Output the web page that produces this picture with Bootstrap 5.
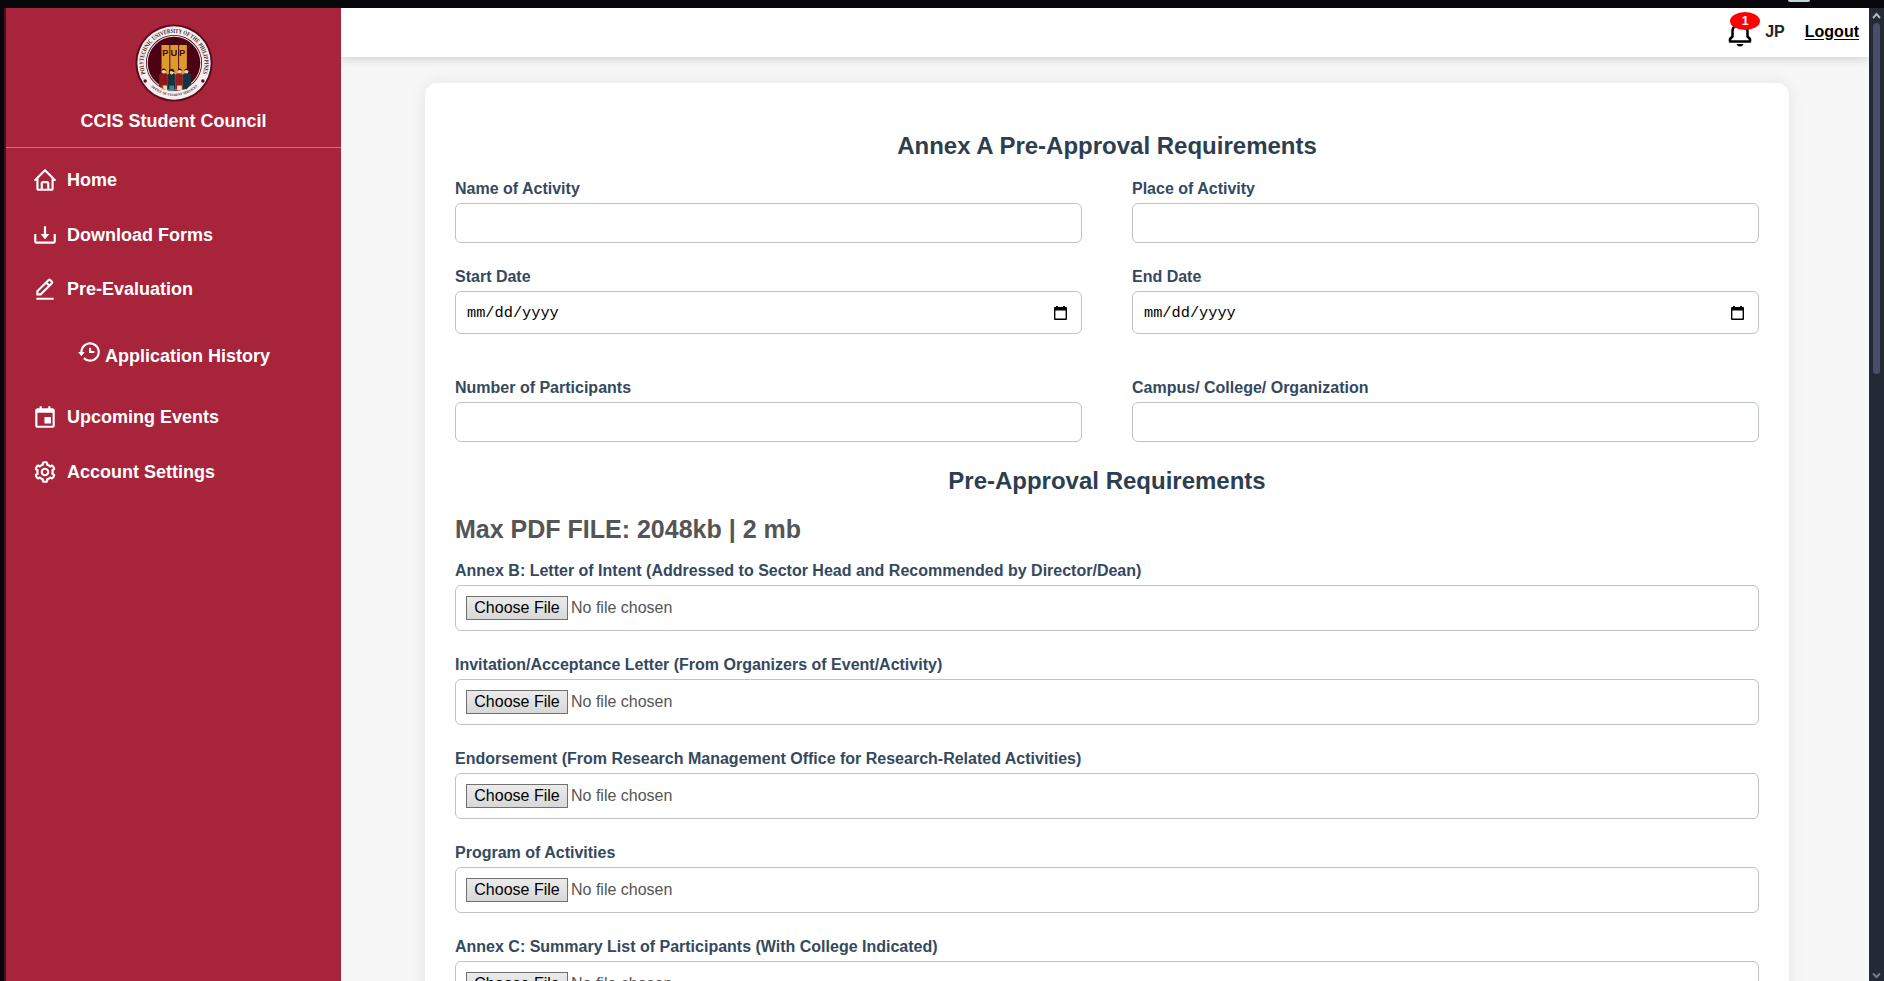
<!DOCTYPE html>
<html lang="en">
<head>
<meta charset="utf-8">
<title>CCIS Student Council</title>
<link href="https://cdn.jsdelivr.net/npm/bootstrap@5.3.0/dist/css/bootstrap.min.css" rel="stylesheet">
<style>
html, body { height: 100%; }
body { font-family: "Liberation Sans", Arial, sans-serif; font-size: 16px; background: #08080c; }
.screen { height: 981px; padding: 8px 0 0 4px; }
.tab-mark { left: 1788px; top: 0; width: 22px; height: 2px; background: #bcd6d0; border-radius: 0 0 8px 8px; }
.sidebar { width: 337px; background: #a7243b; border-left: 2px solid #4a0f22; color: #fff; font-size: 18px; font-weight: 700; line-height: 24px; }
.brand { height: 140px; border-bottom: 1px solid #cb7484; padding-top: 16px; }
.brand svg { width: 78px; height: 78px; }
.brand-name { margin-top: 7px; }
.side-menu a { color: #fff; height: 55px; padding: 1px 0 0 26px; gap: 9px; }
.side-menu svg { width: 26px; height: 26px; fill: #fff; }
.side-menu { padding-top: 4px; }
.side-menu a.tight { height: 54px; padding-top: 0; }
.side-menu a.sub { height: 73px; padding: 7px 0 0 70px; gap: 3px; }
.side-menu a.sub svg { margin-top: -9px; }
.page { background: #f7f7f7; }
.topbar { height: 49px; background: #fff; box-shadow: 0 2px 10px rgba(0,0,0,.16); padding: 0 10px 2px 0; font-weight: 700; z-index: 2; }
.topbar a { color: #000; margin-left: 20px; text-underline-offset: 2px; }
.bell { width: 30px; height: 30px; margin-right: 10px; }
.bell svg { width: 30px; height: 30px; display: block; margin-top: 2px; }
.count { left: 5px; top: -5px; width: 30px; height: 18px; border-radius: 50%; background: #f00; color: #fff; font-size: 12.5px; line-height: 18px; text-align: center; }
.form-card { margin: 26px 80px 0 84px; height: 1000px; padding: 49px 30px 0; background: #fff; border-radius: 12px; box-shadow: 0 0 16px rgba(0,0,0,.09); }
h2 { font-size: 24px; line-height: 28px; font-weight: 700; color: #2c3e50; text-align: center; margin: 0; }
.limit { font-size: 25px; line-height: 28px; font-weight: 700; color: #555; margin: 20px 0 15px; }
.cols { display: grid; grid-template-columns: 1fr 1fr; column-gap: 50px; }
.lbl { font-weight: 700; color: #34495e; line-height: 24px; padding-top: 1px; margin-bottom: 2px; }
.field { border: 1px solid #bdc3c7; border-radius: 6px; height: 40px; background: #fff; }
.field.date { height: 43px; padding: 2px 14px 0 11px; font-family: "Liberation Mono", monospace; font-size: 15.3px; color: #000; }
.field.date svg { width: 13px; height: 15px; }
.field.file { height: 46px; padding: 0 10px; color: #555; }
.pick { width: 102px; height: 24px; border: 1px solid #707070; background: linear-gradient(#ebebeb, #d8d8d8); color: #000; line-height: 22px; text-align: center; margin-right: 3px; }
.scroller { width: 15px; background: #242936; padding: 4px 0 2px; }
.thumb { width: 7px; height: 351px; border-radius: 4px; background: #4b4e67; margin-top: 4px; }
</style>
</head>
<body class="overflow-hidden">
<div class="screen d-flex position-relative overflow-hidden">
  <span class="tab-mark position-absolute"></span>
  <aside class="sidebar flex-shrink-0">
    <div class="brand text-center">
      <svg class="d-block mx-auto" viewBox="0 0 100 100">
        <circle cx="50" cy="50" r="49.5" fill="#5a0a1c"/>
        <circle cx="50" cy="50" r="47" fill="#f6efee"/>
        <circle cx="50" cy="50" r="36" fill="#4b0212"/>
        <circle cx="50" cy="50" r="34.3" fill="none" stroke="#f0dede" stroke-width="1.3"/>
        <defs>
          <path id="arcTop" d="M13.700 64.700A39 39 0 1 1 86.300 64.700"/>
          <path id="arcBottom" d="M12.600 70A42.500 42.500 0 0 0 87.400 70"/>
        </defs>
        <text font-family="Liberation Serif" font-weight="700" font-size="8" fill="#4b1520"><textPath href="#arcTop" startOffset="1" textLength="149" lengthAdjust="spacingAndGlyphs">POLYTECHNIC UNIVERSITY OF THE PHILIPPINES</textPath></text>
        <text font-family="Liberation Serif" font-weight="700" font-size="4.6" fill="#4b1520"><textPath href="#arcBottom" startOffset="13" textLength="66" lengthAdjust="spacingAndGlyphs">OFFICE OF STUDENT SERVICES</textPath></text>
        <circle cx="13" cy="73" r="2.2" fill="#5a0a1c"/><circle cx="87" cy="73" r="2.2" fill="#5a0a1c"/>
        <path d="M34 27h10v57H34zM45.300 27h10v57h-10zM56.500 27h10v57h-10z" fill="#df9a2e"/>
        <text x="35" y="41" font-size="12" font-weight="700" font-family="Liberation Sans" fill="#4b0212" letter-spacing="2.4">PUP</text>
        <path d="M31 80v-15q5-6 11 0v19z" fill="#8e1717"/><path d="M42 84V65q5-5 10 0v19z" fill="#173238"/><path d="M52 84V65q5-5 9 0v19z" fill="#9a1b1d"/><path d="M61 84V65q6-5 11 0v12l-5 6z" fill="#1b3244"/>
        <path d="M35 79h6v6l-4-2zM54 79h6v6h-6z" fill="#efdcc3"/><path d="M44 79h6v7h-6z" fill="#3d8590"/>
        <g fill="#f3cdb5"><circle cx="37" cy="61" r="2.600"/><circle cx="47" cy="62" r="2.600"/><circle cx="57" cy="61" r="2.600"/><circle cx="66" cy="61" r="2.600"/></g>
        <g fill="#20121a"><path d="M33.500 60q3-6 7 0l-4-1zM43.500 65v-5q4-5 7 0v2l-5-2zM54 60q3-6 7 0l-4-1zM62.500 60q4-6 7 0l-4-1z"/></g>
      </svg>
      <div class="brand-name">CCIS Student Council</div>
    </div>
    <nav class="side-menu">
      <a class="d-flex align-items-center text-decoration-none" href="#"><svg viewBox="0 0 24 24"><path d="M3 13h1v7c0 1.103.897 2 2 2h12c1.103 0 2-.897 2-2v-7h1a1 1 0 0 0 .707-1.707l-9-9a.999.999 0 0 0-1.414 0l-9 9A1 1 0 0 0 3 13zm7 7v-5h4v5h-4zm2-15.586 6 6V15l.001 5H16v-5c0-1.103-.897-2-2-2h-4c-1.103 0-2 .897-2 2v5H6v-9.586l6-6z"/></svg><span>Home</span></a>
      <a class="d-flex align-items-center text-decoration-none" href="#"><svg viewBox="0 0 24 24"><path d="m12 16 4-5h-3V4h-2v7H8z"/><path d="M20 18H4v-7H2v7c0 1.103.897 2 2 2h16c1.103 0 2-.897 2-2v-7h-2v7z"/></svg><span>Download Forms</span></a>
      <a class="tight d-flex align-items-center text-decoration-none" href="#"><svg viewBox="0 0 24 24"><path d="M19.045 7.401c.378-.378.586-.88.586-1.414s-.208-1.036-.586-1.414l-1.586-1.586c-.378-.378-.88-.586-1.414-.586s-1.036.208-1.413.585L4 13.585V18h4.413L19.045 7.401zm-3-3 1.587 1.585-1.590 1.584-1.586-1.585 1.589-1.584zM6 16v-1.585l7.040-7.018 1.586 1.586L7.587 16H6zm-2 4h16v2H4z"/></svg><span>Pre-Evaluation</span></a>
      <a class="sub d-flex align-items-center text-decoration-none" href="#"><svg viewBox="0 0 24 24"><path d="M12 8v5h5v-2h-3V8z"/><path d="M21.292 8.497a8.957 8.957 0 0 0-1.928-2.862 9.004 9.004 0 0 0-4.550-2.452 9.090 9.090 0 0 0-3.626 0 8.965 8.965 0 0 0-4.552 2.453 9.048 9.048 0 0 0-1.928 2.860A8.963 8.963 0 0 0 4 12l.001.025H2L5 16l3-3.975H6.001L6 12a6.957 6.957 0 0 1 1.195-3.913 7.066 7.066 0 0 1 1.891-1.892 7.034 7.034 0 0 1 2.503-1.054 7.003 7.003 0 0 1 8.269 5.445 7.117 7.117 0 0 1 0 2.824 6.936 6.936 0 0 1-1.054 2.503c-.25.371-.537.72-.854 1.036a7.058 7.058 0 0 1-2.225 1.501 6.980 6.980 0 0 1-1.313.408 7.117 7.117 0 0 1-2.823 0 6.957 6.957 0 0 1-2.501-1.053 7.066 7.066 0 0 1-1.037-.855l-1.414 1.414A8.985 8.985 0 0 0 13 21a9.050 9.050 0 0 0 3.503-.707 9.009 9.009 0 0 0 3.959-3.260A8.968 8.968 0 0 0 22 12a8.928 8.928 0 0 0-.708-3.503z"/></svg><span>Application History</span></a>
      <a class="d-flex align-items-center text-decoration-none" href="#"><svg viewBox="0 0 24 24"><path d="M19 4h-2V2h-2v2H9V2H7v2H5c-1.103 0-2 .897-2 2v14c0 1.103.897 2 2 2h14c1.103 0 2-.897 2-2V6c0-1.103-.897-2-2-2zm0 16H5V8h14z"/><path d="M11.500 12h6v6h-6z"/></svg><span>Upcoming Events</span></a>
      <a class="d-flex align-items-center text-decoration-none" href="#"><svg viewBox="0 0 24 24"><path d="M12 16c2.206 0 4-1.794 4-4s-1.794-4-4-4-4 1.794-4 4 1.794 4 4 4zm0-6c1.084 0 2 .916 2 2s-.916 2-2 2-2-.916-2-2 .916-2 2-2z"/><path d="m2.845 16.136 1 1.730c.531.917 1.809 1.261 2.730.730l.529-.306A8.100 8.100 0 0 0 9 19.402V20c0 1.103.897 2 2 2h2c1.103 0 2-.897 2-2v-.598a8.132 8.132 0 0 0 1.896-1.111l.530.306c.923.530 2.198.188 2.731-.731l.999-1.729a2.001 2.001 0 0 0-.731-2.732l-.505-.292a7.718 7.718 0 0 0 0-2.224l.505-.292a2.002 2.002 0 0 0 .731-2.732l-.999-1.729c-.531-.920-1.808-1.265-2.731-.732l-.530.306A8.100 8.100 0 0 0 15 4.598V4c0-1.103-.897-2-2-2h-2c-1.103 0-2 .897-2 2v.598a8.132 8.132 0 0 0-1.896 1.111l-.530-.306c-.924-.531-2.200-.187-2.731.732l-.999 1.729a2.001 2.001 0 0 0 .731 2.732l.505.292a7.683 7.683 0 0 0 0 2.223l-.505.292a2.003 2.003 0 0 0-.731 2.733zm3.326-2.758A5.703 5.703 0 0 1 6 12c0-.462.058-.926.170-1.378a.999.999 0 0 0-.470-1.108l-1.123-.650.998-1.729 1.145.662a.997.997 0 0 0 1.188-.142 6.071 6.071 0 0 1 2.384-1.399A1 1 0 0 0 11 5.300V4h2v1.300a1 1 0 0 0 .708.956 6.083 6.083 0 0 1 2.384 1.399.999.999 0 0 0 1.188.142l1.144-.661 1 1.729-1.124.649a1 1 0 0 0-.470 1.108c.112.452.170.916.170 1.378 0 .461-.058.925-.171 1.378a1 1 0 0 0 .471 1.108l1.123.649-.998 1.729-1.145-.661a.996.996 0 0 0-1.188.142 6.071 6.071 0 0 1-2.384 1.399A1 1 0 0 0 13 18.700l.002 1.300H11v-1.300a1 1 0 0 0-.708-.956 6.083 6.083 0 0 1-2.384-1.399.992.992 0 0 0-1.188-.141l-1.144.662-1-1.729 1.124-.651a1 1 0 0 0 .471-1.108z"/></svg><span>Account Settings</span></a>
    </nav>
  </aside>
  <main class="page flex-grow-1 overflow-hidden">
    <header class="topbar d-flex justify-content-end align-items-center position-relative">
      <div class="bell position-relative">
        <svg viewBox="0 0 24 24"><path d="M19 13.586V10c0-3.217-2.185-5.927-5.145-6.742C13.562 2.520 12.846 2 12 2s-1.562.520-1.855 1.258C7.185 4.074 5 6.783 5 10v3.586l-1.707 1.707A.996.996 0 0 0 3 16v2a1 1 0 0 0 1 1h16a1 1 0 0 0 1-1v-2a.996.996 0 0 0-.293-.707L19 13.586zM19 17H5v-.586l1.707-1.707A.996.996 0 0 0 7 14v-4c0-2.757 2.243-5 5-5s5 2.243 5 5v4c0 .266.105.520.293.707L19 16.414V17zm-7 5a2.980 2.980 0 0 0 2.818-2H9.182A2.980 2.980 0 0 0 12 22z"/></svg>
        <span class="count position-absolute">1</span>
      </div>
      <span>JP</span>
      <a href="#">Logout</a>
    </header>
    <section class="form-card">
      <h2>Annex A Pre-Approval Requirements</h2>
      <div class="cols mt-3">
        <div><div class="lbl">Name of Activity</div><div class="field"></div></div>
        <div><div class="lbl">Place of Activity</div><div class="field"></div></div>
      </div>
      <div class="cols" style="margin-top:21px">
        <div><div class="lbl">Start Date</div><div class="field date d-flex align-items-center justify-content-between"><span>mm/dd/yyyy</span><svg viewBox="0 0 13 15"><path d="M2 0h2v1h5V0h2v1h1a1 1 0 0 1 1 1v11a1 1 0 0 1-1 1H1a1 1 0 0 1-1-1V2a1 1 0 0 1 1-1h1zM1.400 4.500v8.100h10.200V4.500z"/></svg></div></div>
        <div><div class="lbl">End Date</div><div class="field date d-flex align-items-center justify-content-between"><span>mm/dd/yyyy</span><svg viewBox="0 0 13 15"><path d="M2 0h2v1h5V0h2v1h1a1 1 0 0 1 1 1v11a1 1 0 0 1-1 1H1a1 1 0 0 1-1-1V2a1 1 0 0 1 1-1h1zM1.400 4.500v8.100h10.200V4.500z"/></svg></div></div>
      </div>
      <div class="cols" style="margin-top:41px">
        <div><div class="lbl">Number of Participants</div><div class="field"></div></div>
        <div><div class="lbl">Campus/ College/ Organization</div><div class="field"></div></div>
      </div>
      <h2 style="margin-top:25px">Pre-Approval Requirements</h2>
      <div class="limit">Max PDF FILE: 2048kb | 2 mb</div>
      <div class="d-grid" style="row-gap:21px">
        <div><div class="lbl">Annex B: Letter of Intent (Addressed to Sector Head and Recommended by Director/Dean)</div><div class="field file d-flex align-items-center"><span class="pick">Choose File</span><span>No file chosen</span></div></div>
        <div><div class="lbl">Invitation/Acceptance Letter (From Organizers of Event/Activity)</div><div class="field file d-flex align-items-center"><span class="pick">Choose File</span><span>No file chosen</span></div></div>
        <div><div class="lbl">Endorsement (From Research Management Office for Research-Related Activities)</div><div class="field file d-flex align-items-center"><span class="pick">Choose File</span><span>No file chosen</span></div></div>
        <div><div class="lbl">Program of Activities</div><div class="field file d-flex align-items-center"><span class="pick">Choose File</span><span>No file chosen</span></div></div>
        <div><div class="lbl">Annex C: Summary List of Participants (With College Indicated)</div><div class="field file d-flex align-items-center"><span class="pick">Choose File</span><span>No file chosen</span></div></div>
      </div>
    </section>
  </main>
  <div class="scroller d-flex flex-column align-items-center flex-shrink-0">
    <svg width="9" height="7" viewBox="0 0 9 7"><path d="M1 6 4.500 2 8 6" fill="none" stroke="#b5b5b5" stroke-width="2"/></svg>
    <div class="thumb"></div>
    <svg class="mt-auto" width="9" height="7" viewBox="0 0 9 7"><path d="M1 1.500 4.500 5 8 1.500" fill="none" stroke="#7d7d7d" stroke-width="2"/></svg>
  </div>
</div>
<script src="https://cdn.jsdelivr.net/npm/bootstrap@5.3.0/dist/js/bootstrap.bundle.min.js"></script>
</body>
</html>
